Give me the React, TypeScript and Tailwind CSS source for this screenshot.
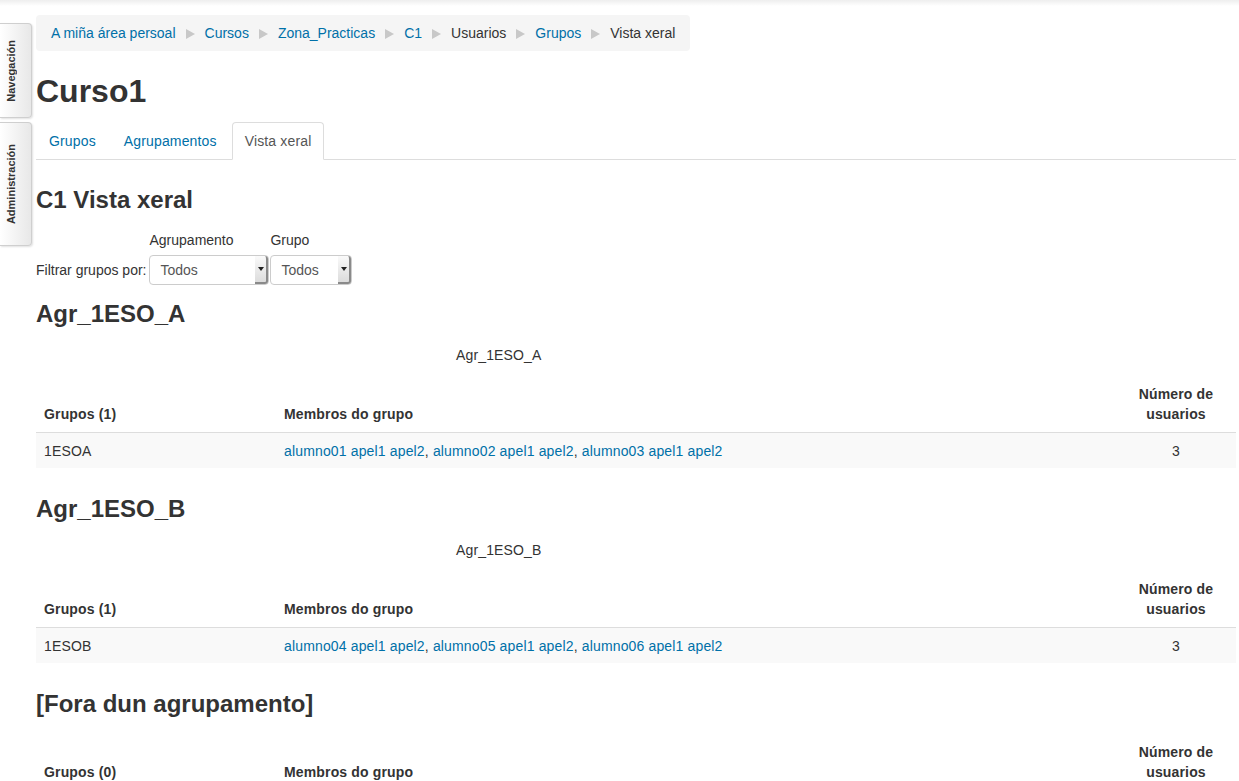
import * as React from "react";

const crumbs: Array<{ label: string; link: boolean }> = [
  { label: "A miña área persoal", link: true },
  { label: "Cursos", link: true },
  { label: "Zona_Practicas", link: true },
  { label: "C1", link: true },
  { label: "Usuarios", link: false },
  { label: "Grupos", link: true },
  { label: "Vista xeral", link: false },
];

type Section = {
  title: string;
  caption?: string;
  groups: Array<{ name: string; members: string[]; count: number }>;
};

const sections: Section[] = [
  {
    title: "Agr_1ESO_A",
    caption: "Agr_1ESO_A",
    groups: [
      {
        name: "1ESOA",
        members: ["alumno01 apel1 apel2", "alumno02 apel1 apel2", "alumno03 apel1 apel2"],
        count: 3,
      },
    ],
  },
  {
    title: "Agr_1ESO_B",
    caption: "Agr_1ESO_B",
    groups: [
      {
        name: "1ESOB",
        members: ["alumno04 apel1 apel2", "alumno05 apel1 apel2", "alumno06 apel1 apel2"],
        count: 3,
      },
    ],
  },
  { title: "[Fora dun agrupamento]", groups: [] },
];

function SideTab({ label, height }: { label: string; height: string }) {
  return (
    <div
      className={`${height} w-[32px] flex items-center justify-start pl-[4px] rounded-r-[4px] border border-l-0 border-[#cfcfcf] bg-gradient-to-r from-white to-[#e8e8e8] shadow-[1px_1px_2px_rgba(0,0,0,0.12)]`}
    >
      <span className="[writing-mode:vertical-rl] rotate-180 text-[11px] font-bold text-[#333] leading-[14px] tracking-normal">
        {label}
      </span>
    </div>
  );
}

function Select({ width, value }: { width: string; value: string }) {
  return (
    <div className={`${width} relative h-[30px] rounded-[4px] border border-[#ccc] bg-white flex items-center`}>
      <span className="pl-[10px] text-[14px] text-[#555]">{value}</span>
      <div className="absolute right-0 top-0 bottom-0 w-[13px] rounded-r-[3px] border-r-2 border-b-2 border-[#8a8a8a] bg-gradient-to-b from-[#fafafa] to-[#dcdcdc] flex items-center justify-center">
        <svg width="6" height="4" viewBox="0 0 6 4">
          <path d="M0 0 L6 0 L3 4 Z" fill="#222" />
        </svg>
      </div>
    </div>
  );
}

function GroupTable({ section }: { section: Section }) {
  return (
    <div>
      <h3 className="text-[24px] font-bold leading-[40px] text-[#333] tracking-normal">{section.title}</h3>
      {section.caption && (
        <div className="mt-[11px] ml-[420px] h-[21px] leading-[21px] text-[14px] text-[#333]">
          {section.caption}
        </div>
      )}
      <table className="mt-[10px] w-full border-collapse text-[14px]">
        <thead>
          <tr className="border-b border-[#ddd]">
            <th className="w-[240px] px-[8px] py-[8px] text-left align-bottom font-bold leading-[20px]">
              Grupos ({section.groups.length})
            </th>
            <th className="px-[8px] py-[8px] text-left align-bottom font-bold leading-[20px]">
              Membros do grupo
            </th>
            <th className="w-[120px] px-[8px] py-[8px] text-center align-bottom font-bold leading-[20px]">
              Número de
              <br />
              usuarios
            </th>
          </tr>
        </thead>
        <tbody>
          {section.groups.map((g) => (
            <tr key={g.name} className="bg-[#f9f9f9]">
              <td className="px-[8px] pt-[9px] pb-[7px] leading-[19px]">{g.name}</td>
              <td className="px-[8px] pt-[9px] pb-[7px] leading-[19px]">
                {g.members.map((m, i) => (
                  <React.Fragment key={m}>
                    <a className="text-[#0070a8]">{m}</a>
                    {i < g.members.length - 1 && ", "}
                  </React.Fragment>
                ))}
              </td>
              <td className="px-[8px] pt-[9px] pb-[7px] text-center leading-[19px]">{g.count}</td>
            </tr>
          ))}
        </tbody>
      </table>
    </div>
  );
}

export default function App() {
  return (
    <div className="min-h-screen bg-white text-[#333] font-['Liberation_Sans',Arial,sans-serif] text-[14px] tracking-[0.15px] overflow-hidden">
      <div className="h-[6px] bg-gradient-to-b from-[#eeeeee] to-white" />
      <div className="flex gap-[4px]">
        <div className="flex flex-col gap-[4px] pt-[17px]">
          <SideTab label="Navegación" height="h-[95px]" />
          <SideTab label="Administración" height="h-[124px]" />
        </div>

        <div className="w-[1200px] pt-[9px]">
          {/* Breadcrumb */}
          <div className="inline-flex items-center h-[36px] rounded-[4px] bg-[#f5f5f5] px-[15px] pt-[1px] tracking-normal">
            {crumbs.map((c, i) => (
              <React.Fragment key={c.label + i}>
                {i > 0 && (
                  <svg className="mx-[10px]" width="9" height="10" viewBox="0 0 9 10">
                    <path d="M0 0 L9 5 L0 10 Z" fill="#c8c8c8" />
                  </svg>
                )}
                <span className={c.link ? "text-[#0070a8]" : "text-[#333]"}>{c.label}</span>
              </React.Fragment>
            ))}
          </div>

          <h1 className="mt-[20px] text-[32px] font-bold leading-[40px] text-[#333] tracking-normal">Curso1</h1>

          {/* Tabs */}
          <div className="mt-[11px] flex border-b border-[#ddd]">
            <a className="mr-[2px] -mb-px border border-transparent px-[12px] py-[8px] leading-[20px] text-[#0070a8]">
              Grupos
            </a>
            <a className="mr-[2px] -mb-px border border-transparent px-[12px] py-[8px] leading-[20px] text-[#0070a8]">
              Agrupamentos
            </a>
            <span className="mr-[2px] -mb-px rounded-t-[4px] border border-[#ddd] border-b-white bg-white px-[12px] py-[8px] leading-[20px] text-[#555]">
              Vista xeral
            </span>
          </div>

          <h2 className="mt-[20px] text-[24px] font-bold leading-[40px] text-[#333] tracking-normal">C1 Vista xeral</h2>

          {/* Filter */}
          <div className="mt-[10px] flex items-end tracking-normal">
            <span className="mr-[3px] leading-[30px]">Filtrar grupos por:</span>
            <div className="flex flex-col">
              <span className="leading-[20px] mb-[5px]">Agrupamento</span>
              <Select width="w-[120px]" value="Todos" />
            </div>
            <div className="ml-[1px] flex flex-col">
              <span className="leading-[20px] mb-[5px]">Grupo</span>
              <Select width="w-[82px]" value="Todos" />
            </div>
          </div>

          <div className="mt-[9px] flex flex-col gap-[21px]">
            {sections.map((s) => (
              <GroupTable key={s.title} section={s} />
            ))}
          </div>
        </div>
      </div>
    </div>
  );
}
